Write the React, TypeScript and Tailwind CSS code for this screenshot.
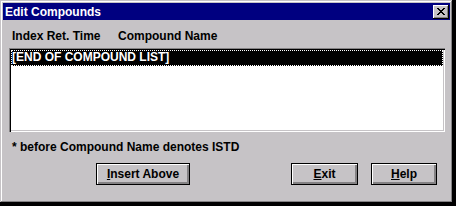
import React from 'react';

const font = { fontFamily: '"Liberation Sans", Arial, sans-serif' };

function Win95Button({ label, hot, width }: { label: string; hot: string; width: string }) {
  const rest = label.slice(1);
  return (
    <button
      className={`${width} h-[22px] border border-black bg-[#c6c3c6] text-[12px] font-bold text-black shadow-[inset_1px_1px_#fff,inset_-1px_-1px_#848284,inset_-2px_-2px_#848284] flex items-center justify-center`}
    >
      <span>
        <span className="underline">{hot}</span>
        {rest}
      </span>
    </button>
  );
}

export default function App() {
  return (
    <div className="w-[456px] h-[206px] bg-black" style={font}>
      <div className="w-[453px] h-[203px] bg-[#c6c3c6] p-[3px] flex flex-col shadow-[inset_-1px_-1px_#000,inset_1px_1px_#c6c3c6,inset_-2px_-2px_#848284,inset_2px_2px_#fff]">
        <div className="h-[17px] bg-[#000080] flex items-center justify-between pl-[2px] pr-[1px]">
          <span className="text-white font-bold text-[12px] leading-[14px]">Edit Compounds</span>
          <div className="w-[16px] h-[14px] bg-[#c6c3c6] flex items-center justify-center shadow-[inset_-1px_-1px_#000,inset_1px_1px_#fff,inset_-2px_-2px_#848284]">
            <svg width="8" height="7" viewBox="0 0 8 7" shapeRendering="crispEdges">
              <path d="M0 0h2v1h-2zM6 0h2v1h-2zM1 1h2v1h-2zM5 1h2v1h-2zM2 2h4v1h-4zM3 3h2v1h-2zM2 4h4v1h-4zM1 5h2v1h-2zM5 5h2v1h-2zM0 6h2v1h-2zM6 6h2v1h-2z" fill="#000" />
            </svg>
          </div>
        </div>

        <div className="mt-[9px] ml-[9px] flex text-[12px] leading-[14px] font-bold text-black">
          <span className="w-[106px]">Index Ret. Time</span>
          <span>Compound Name</span>
        </div>

        <div className="mt-[5px] ml-[6px] w-[436px] h-[84px] bg-white p-[2px] shadow-[inset_1px_1px_#848284,inset_2px_2px_#000,inset_-1px_-1px_#fff,inset_-2px_-2px_#c6c3c6]">
          <div className="h-[16px] bg-black text-white font-bold text-[12px] leading-[14px] px-[1px] outline outline-1 outline-dotted outline-white -outline-offset-1">
            [END OF COMPOUND LIST]
          </div>
        </div>

        <div className="mt-[8px] ml-[9px] text-[12px] leading-[14px] font-bold text-black">
          * before Compound Name denotes ISTD
        </div>

        <div className="mt-[9px] flex">
          <div className="ml-[93px]">
            <Win95Button label="Insert Above" hot="I" width="w-[94px]" />
          </div>
          <div className="ml-[101px]">
            <Win95Button label="Exit" hot="E" width="w-[67px]" />
          </div>
          <div className="ml-[13px]">
            <Win95Button label="Help" hot="H" width="w-[66px]" />
          </div>
        </div>
      </div>
    </div>
  );
}
